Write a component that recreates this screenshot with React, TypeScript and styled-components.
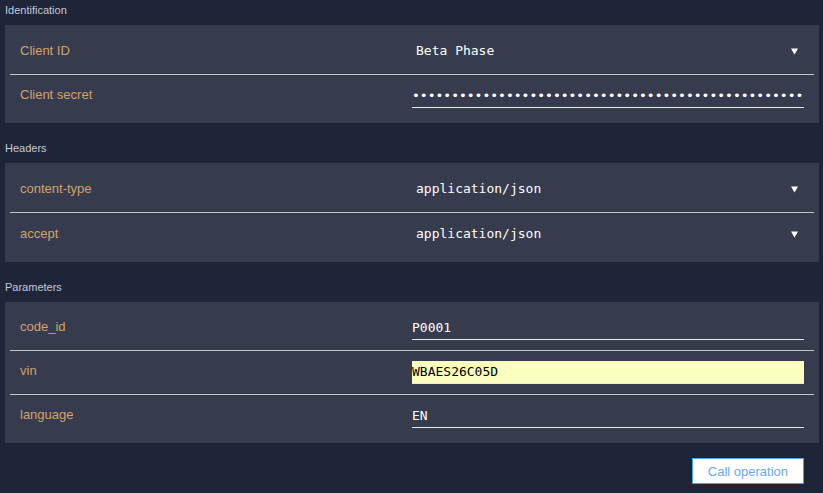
import React from "react";
import styled, { createGlobalStyle } from "styled-components";

const GlobalStyle = createGlobalStyle`
  html, body {
    margin: 0;
    padding: 0;
    background: #1f2538;
  }
  body {
    font-family: "Liberation Sans", Arial, sans-serif;
  }
`;

type Field =
  | { kind: "select"; label: string; value: string }
  | { kind: "password"; label: string; value: string }
  | { kind: "text"; label: string; value: string; autofill?: boolean };

const sections: { title: string; fields: Field[] }[] = [
  {
    title: "Identification",
    fields: [
      { kind: "select", label: "Client ID", value: "Beta Phase" },
      { kind: "password", label: "Client secret", value: "s".repeat(50) },
    ],
  },
  {
    title: "Headers",
    fields: [
      { kind: "select", label: "content-type", value: "application/json" },
      { kind: "select", label: "accept", value: "application/json" },
    ],
  },
  {
    title: "Parameters",
    fields: [
      { kind: "text", label: "code_id", value: "P0001" },
      { kind: "text", label: "vin", value: "WBAES26C05D", autofill: true },
      { kind: "text", label: "language", value: "EN" },
    ],
  },
];

const App = () => {
  return (
    <>
      <GlobalStyle />
      <Page>
        {sections.map((section, i) => (
          <Section key={section.title} $first={i === 0}>
            <SectionTitle>{section.title}</SectionTitle>
            <Panel>
              {section.fields.map((field) => (
                <Row key={field.label}>
                  <Label>{field.label}</Label>
                  <Value>
                    {field.kind === "select" ? (
                      <SelectWrap>
                        <Select defaultValue={field.value}>
                          <option>{field.value}</option>
                        </Select>
                        <Arrow viewBox="0 0 7 7" aria-hidden>
                          <path d="M0 0.5 H7 L3.5 6.5 Z" fill="#ffffff" />
                        </Arrow>
                      </SelectWrap>
                    ) : (
                      <Input
                        type={field.kind === "password" ? "password" : "text"}
                        defaultValue={field.value}
                        $autofill={field.kind === "text" && !!field.autofill}
                        readOnly
                      />
                    )}
                  </Value>
                </Row>
              ))}
            </Panel>
          </Section>
        ))}
        <Actions>
          <CallButton type="button">Call operation</CallButton>
        </Actions>
      </Page>
    </>
  );
};

export default App;

const Page = styled.div`
  width: 823px;
  min-height: 493px;
  box-sizing: border-box;
  padding: 0 4px 0 5px;
`;

const Section = styled.section<{ $first: boolean }>`
  margin-top: ${(p) => (p.$first ? "0" : "15px")};
`;

const SectionTitle = styled.h2`
  margin: 0 0 5px;
  font-size: 11px;
  font-weight: normal;
  line-height: 20px;
  color: #c3cad8;
`;

const Panel = styled.div`
  background: #363b4e;
  padding: 5px;
`;

const Row = styled.div`
  display: grid;
  grid-template-columns: 1fr 1fr;
  align-items: center;
  padding: 10px;
  border-bottom: 1px solid #c4c4c4;

  &:last-child {
    border-bottom: none;
  }
`;

const Label = styled.div`
  margin-bottom: 4px;
  font-size: 13px;
  color: #d2a468;
`;

const Value = styled.div`
  min-width: 0;
`;

const SelectWrap = styled.div`
  display: grid;
  align-items: center;
`;

const Select = styled.select`
  grid-area: 1 / 1;
  appearance: none;
  box-sizing: border-box;
  width: 100%;
  height: 24px;
  margin: 0;
  padding: 0 20px 3px 4px;
  border: none;
  background: transparent;
  color: #ffffff;
  font-family: "DejaVu Sans Mono", monospace;
  font-size: 13px;
  outline: none;
`;

const Arrow = styled.svg`
  grid-area: 1 / 1;
  justify-self: end;
  width: 7px;
  height: 7px;
  margin-right: 6px;
  margin-top: -1px;
  pointer-events: none;
`;

const Input = styled.input<{ $autofill: boolean }>`
  display: block;
  box-sizing: border-box;
  width: 100%;
  height: 23px;
  margin: 0;
  padding: 0 0 2px;
  border: none;
  border-bottom: 1px solid #e6e6e6;
  background: ${(p) => (p.$autofill ? "#faffbd" : "transparent")};
  color: ${(p) => (p.$autofill ? "#000000" : "#ffffff")};
  font-family: "DejaVu Sans Mono", monospace;
  font-size: 13px;
  outline: none;
`;

const Actions = styled.div`
  display: flex;
  justify-content: flex-end;
  margin-top: 15px;
  padding: 0 15px;
`;

const CallButton = styled.button`
  height: 26px;
  padding: 0 15px;
  background: #ffffff;
  border: 1px solid #4ca2f2;
  border-radius: 0;
  color: #6aa6ee;
  font-family: "Liberation Sans", Arial, sans-serif;
  font-size: 13px;
  cursor: pointer;
`;
